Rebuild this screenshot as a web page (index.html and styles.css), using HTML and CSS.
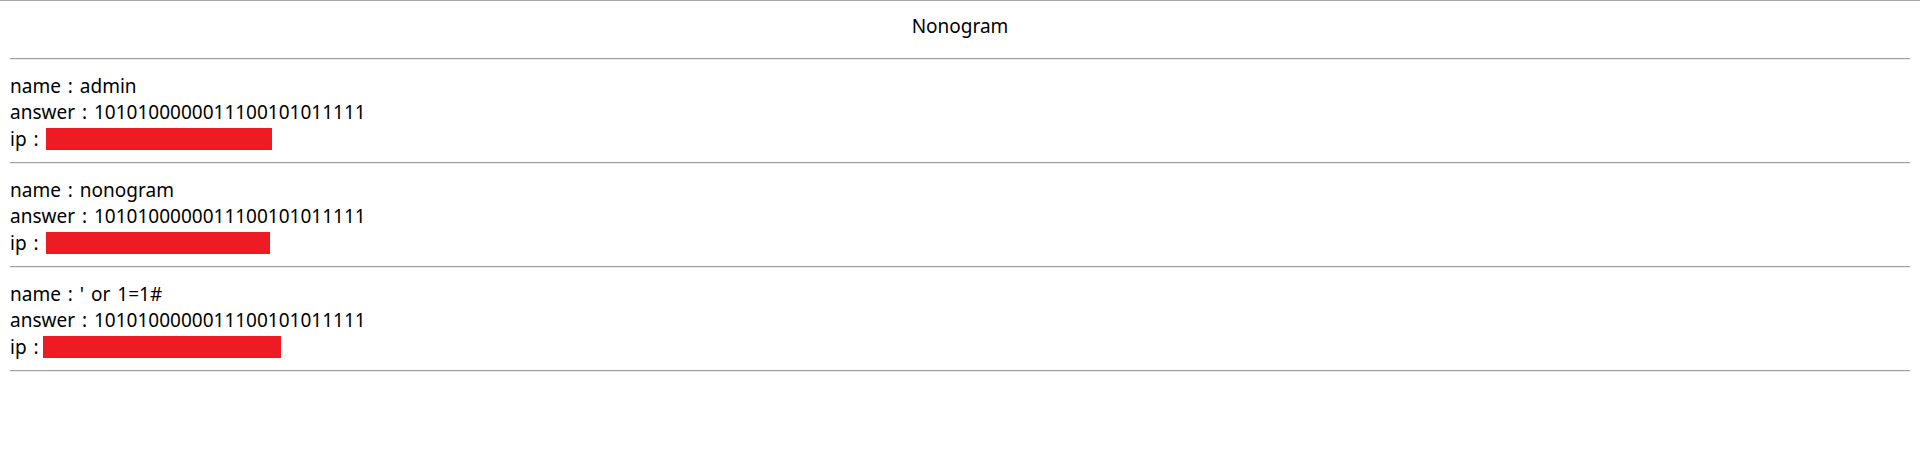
FILE: index.html
```html
<!DOCTYPE html>
<html lang="ko">
<head>
<meta charset="utf-8">
<title>Nonogram</title>
<link rel="stylesheet" href="styles.css">
</head>
<body>
<div class="title">Nonogram</div>
<hr class="rule">
<div class="entry">name : admin<br>answer : 1010100000011100101011111<br>ip : <span class="redact redact-a"></span></div>
<hr class="rule">
<div class="entry">name : nonogram<br>answer : 1010100000011100101011111<br>ip : <span class="redact redact-b"></span></div>
<hr class="rule">
<div class="entry">name : ' or 1=1#<br>answer : 1010100000011100101011111<br>ip :<span class="redact redact-c"></span></div>
<hr class="rule">
</body>
</html>
```
FILE: styles.css
```css
html {
  border-top: 1px solid #a8a8a8;
  background: #fff;
}
body {
  margin: 10px;
  font-family: "Noto Sans", "Noto Sans CJK KR", sans-serif;
  font-size: 19px;
  line-height: 27.3px;
  word-spacing: 2px;
  color: #000;
}
.title {
  text-align: center;
  padding-top: 2px;
  height: 35px;
}
.rule {
  border: none;
  border-top: 1px solid #a0a0a0;
  border-bottom: 1px solid #ececec;
  height: 0;
  margin: 10px 0;
}
.entry {
  padding-top: 3px;
  line-height: 26.33px;
}
.redact {
  display: inline-block;
  height: 22px;
  background: #ed1c24;
  vertical-align: -4px;
}
.redact-a { width: 226px; }
.redact-b { width: 224px; }
.redact-c { width: 238px; margin-left: 4px; }
```
